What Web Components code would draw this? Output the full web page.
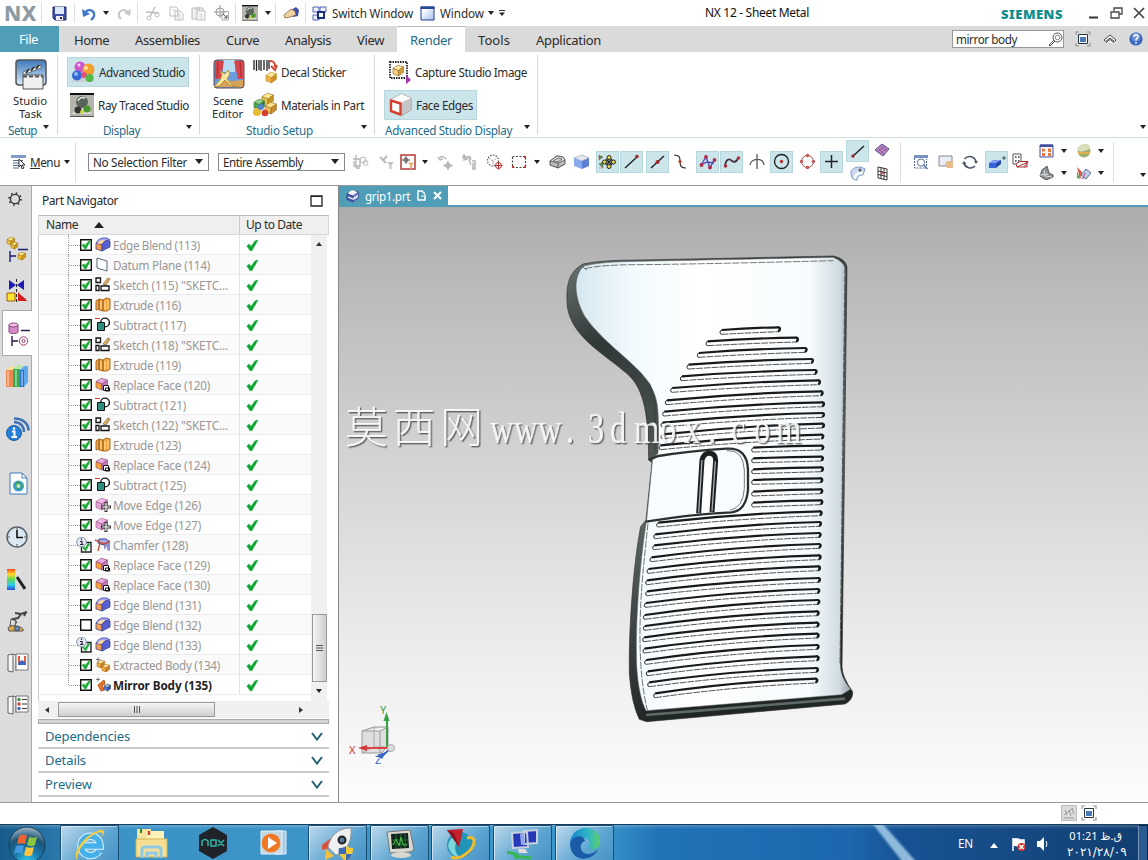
<!DOCTYPE html>
<html lang="en"><head><meta charset="utf-8"><title>NX 12 - Sheet Metal</title>
<style>html,body{margin:0;padding:0}body{width:1148px;height:860px;overflow:hidden;font-family:"Noto Sans","Open Sans",sans-serif;color:#2b2b2b;background:#fff}</style></head>
<body><nx-app></nx-app>
<script>
const svg=(w,h,b)=>`<svg width="${w}" height="${h}" viewBox="0 0 ${w} ${h}" fill="none">${b}</svg>`;
const block=(x,y,s,a,b,c,k='#555')=>`<g stroke="${k}" stroke-width=".6"><path d="M${x} ${y+s*.3}l${s*.5} ${s*.2}v${s*.5}l${-s*.5} ${-s*.2}z" fill="${b}"/><path d="M${x} ${y+s*.3}l${s*.45} ${-s*.28}l${s*.5} ${s*.15}l${-s*.45} ${s*.33}z" fill="${a}"/><path d="M${x+s*.5} ${y+s*.5}l${s*.45} ${-s*.33}v${s*.5}l${-s*.45} ${s*.33}z" fill="${c}"/></g>`;
const trace=(s)=>`<g transform="scale(${s/24})"><path d="M0 0h24v24H0z" fill="#b4b4ac"/><path d="M0 1h24" stroke="#111" stroke-width="2"/><path d="M0 23.500h24" stroke="#555"/><path d="M2 21l5-6h11l4 6z" fill="#ddd"/><circle cx="12" cy="9" r="6" fill="#59645a"/><path d="M8 8a5 5 0 0 1 7-3" stroke="#eee" stroke-width="1.500"/><circle cx="8" cy="17" r="3.500" fill="#333"/><circle cx="17" cy="16" r="3.600" fill="#49962f"/><circle cx="12" cy="19" r="2" fill="#d3d33c"/></g>`;
const blend='<g stroke="#3a3f98" stroke-width=".8"><path d="M1 6l6 1.500V14l-6-2z" fill="#f6a24a"/><path d="M7 7.500Q8 4 12 3.500l3 .5V10l-8 4z" fill="#5a5fd0"/><path d="M1 6Q3 2 7 1h5l3 2Q9 3 7 7.500z" fill="#a9acf2"/></g><path d="M2 6.500Q4 3.500 7 3l3 .5Q8 5 6.500 7z" fill="#ffd79a"/>';
const rep=block(1,1,12,'#e9a8e6','#f6a138','#c77bc5','#7b3c5c')+'<path d="M8.500 8.500h5v5h-5zM10.500 11h4v3h-4z" stroke="#111" fill="#fff"/>';
const sub='<path d="M0 1.500h5" stroke="#e03030"/><circle cx="10" cy="5.500" r="4.400" stroke="#111" stroke-width="1.400"/><path d="M2.500 5.500h7v8h-7z" fill="#2f8f7e" stroke="#111"/>';
const reel='<path d="M2 5q3-5 7 0M1 3l2 3 3-1" stroke="#b8b8b8" stroke-width="1.400"/><path d="M11 7v9M6.500 11.500h9" stroke="#a9a9a9" stroke-width="1.300"/><circle cx="11" cy="11.500" r="2.500" stroke="#b0b0b0"/>';
const door='<path d="M1 2l5-1v18l-5-1zM6 1l3 1v16" fill="#f5f5f5" stroke="#666"/><path d="M9 1h12v16H9z" fill="#fff" stroke="#777"/>';
const I={
dn:[6,4,'<path d="M0 0h6L3 4z" fill="#222"/>'],dnb:[8,5,'<path d="M0 0h8L4 5z" fill="#222"/>'],up:[10,6,'<path d="M0 6h10L5 0z" fill="#222"/>'],sup:[6,4,'<path d="M0 4h6L3 0z" fill="#333"/>'],lf:[4,6,'<path d="M4 0v6L0 3z" fill="#333"/>'],rt:[4,6,'<path d="M0 0v6l4-3z" fill="#333"/>'],
dnl:[8,6,'<path d="M1 .5h6" stroke="#333"/><path d="M1 2.500h6L4 6z" fill="#222"/>'],
save:[15,15,'<path d="M1 1h13v13H3l-2-2z" fill="#3c50a4" stroke="#1c2a70"/><path d="M3 1h9v7H3z" fill="#dfe8fb"/><path d="M4 10h7v4H4z" fill="#eee"/><path d="M8 11h2v2H8z" fill="#223"/>'],
undo:[15,15,'<path d="M3 7c3-5 10-3 9 3-.5 2-2 3-3 4" stroke="#3f78c8" stroke-width="2.400"/><path d="M0 3l1 8 7-3z" fill="#3f78c8"/>'],
redo:[15,15,'<path d="M12 7C9 2 2 4 3 10c.5 2 1 2 2 3" stroke="#c8c8c8" stroke-width="2"/><path d="M15 3l-1 7-6-3z" fill="#c8c8c8"/>'],
cut:[15,15,'<path d="M10 1L5 11M1 6l13 1" stroke="#bdbdbd" stroke-width="1.400"/><circle cx="4" cy="12" r="2" stroke="#bdbdbd"/><circle cx="12" cy="9" r="2" stroke="#bdbdbd"/>'],
copy:[15,15,'<path d="M1 1h6l2 2v7H1zM6 5h5l3 3v6H6z" fill="#fff" stroke="#bbb"/><path d="M8 8h3M8 10h4M8 12h4M3 4h3" stroke="#ccc"/>'],
paste:[15,15,'<path d="M1 2h11v11H1z" fill="#eee" stroke="#bbb"/><path d="M4 1h5v3H4z" fill="#ccc"/><path d="M6 5h8v9H6z" fill="#fff" stroke="#bbb"/><path d="M8 8h4M8 10h4M8 12h4" stroke="#ccc"/>'],
cross:[16,16,'<circle cx="6" cy="7" r="4" stroke="#999"/><path d="M6 0v13M0 7h12" stroke="#999"/><path d="M8 6.500h6.500V15H8z" stroke="#aaa"/><path d="M9 9l4 4m0-3v3h-3" stroke="#555"/>'],
trs:[16,16,trace(16)],tr:[24,24,trace(24)],
hand:[17,14,'<path d="M8 4l5-3 3 3-1 6-5 1z" fill="#3b4fae"/><path d="M1 9l7-6 4 2 1 4-6 2-5 1z" fill="#f0d3a0" stroke="#75532a" stroke-width=".7"/>'],
sw:[15,15,'<path d="M1 1h6v5H1zM8 1h6v5H8zM1 9h6v5H1z" stroke="#5064b4" fill="#edf1ff"/><path d="M6 6h6v6H6z" fill="#fff" stroke="#1a2f82" stroke-width="2"/>'],
win:[15,15,'<defs><linearGradient id="w" x2="1" y2="1"><stop offset=".2" stop-color="#fff"/><stop offset="1" stop-color="#a8bff0"/></linearGradient></defs><path d="M1 1h13v13H1z" fill="url(#w)" stroke="#1b3f90"/><path d="M.5.500h14v2.500H.5z" fill="#24489b"/>'],
min:[10,3,'<path d="M0 1.500h9" stroke="#333" stroke-width="2"/>'],
rest:[13,12,'<path d="M4 4V1h8v6H9M1 5h8v6H1z" stroke="#444" stroke-width="1.300"/>'],
cls:[12,12,'<path d="M1 1l10 10M11 1L1 11" stroke="#444" stroke-width="1.700"/>'],
mag:[15,15,'<circle cx="9.500" cy="5.500" r="4.500" stroke="#555"/><circle cx="9.500" cy="5.500" r="2.300" stroke="#888"/><path d="M6 8l-5 5 1 1 5-5" stroke="#555"/>'],
full:[16,16,'<path d="M1 4V1h3M12 1h3v3M15 12v3h-3M4 15H1v-3" stroke="#9a9890" stroke-width="1.200"/><path d="M3.500 3.500h9v9h-9z" fill="#fff" stroke="#234"/><path d="M5 6h6v5H5z" fill="#4878b8"/>'],
chev:[14,10,'<path d="M1 6l6-5 6 5-1.500 1.500L7 4 2.500 7.500zM3 8.500l4-3 4 3" stroke="#444" fill="#fff"/>'],
help:[14,14,'<circle cx="7" cy="7" r="6.600" fill="#3c68bf"/><circle cx="7" cy="5" r="4.500" fill="#6a8dd5"/><path d="M5 5c0-3 4-3 4-.5C9 6 7 6 7 8.500M7 10v1.500" stroke="#fff" stroke-width="1.600"/>'],
task:[32,31,'<defs><linearGradient id="a" x2="0" y2="1"><stop stop-color="#3c78bb"/><stop offset="1" stop-color="#dcecf8"/></linearGradient></defs><rect x="1" y="1" width="30" height="25" rx="3" fill="url(#a)" stroke="#555" stroke-width="1.500"/><path d="M8 13L26 6v3L8 16z" fill="#e8eff5" stroke="#333" stroke-width=".6"/><path d="M11 14l3-4M16 12l3-4M21 10l3-4" stroke="#333" stroke-width="1.700"/><path d="M8 16h20v14H8z" fill="#f0f0f0" stroke="#555"/><path d="M8 17.500h20" stroke="#555" stroke-width="2" stroke-dasharray="4 2"/>'],
balls:[24,22,'<path d="M1 20L5 9h18v12H1z" fill="#c8cdd4"/><circle cx="9" cy="6" r="5.500" fill="#cf55cf"/><circle cx="17.500" cy="8.500" r="6" fill="#f4a02c"/><circle cx="6" cy="14.500" r="5" fill="#3567d6"/><circle cx="13" cy="14" r="3" fill="#e34f7a"/><circle cx="18.500" cy="17" r="4" fill="#52ba4b"/><circle cx="8" cy="4" r="1.500" fill="#f4cfff"/><circle cx="15" cy="7" r="2" fill="#ffe2a8"/><circle cx="5" cy="13" r="2" fill="#8cc0f4"/>'],
scene:[32,30,'<rect x="1" y="1" width="30" height="28" rx="3" fill="#679ce0" stroke="#6b4444"/><path d="M10 1h12v12h-12z" fill="#b9dcf5"/><path d="M2 2h9L8 20H2zM21 2h9v18h-5z" fill="#d9444c"/><path d="M5 2L4 19M27 2l1 16" stroke="#a6302e"/><path d="M2 28l6-7 12 1 10-1v7z" fill="#d7a257"/><path d="M7 12l5 3 3-4 2 4-3 5 5 6 7 2-8-1-6-6-6 6-5 1 6-7 2-5z" fill="#f8e99e" stroke="#b49343"/>'],
decal:[25,25,'<path d="M1 1v10M3.500 1v11M6 1v10M8 1v11M11 1v10M14 1v11M16 1v9" stroke="#222" stroke-width="1.300"/><path d="M17 2c4 0 5 2 5 6M18 7l4 4 2-5" stroke="#d3402e" stroke-width="2"/>'+block(13,13,11,'#ffe79b','#eeb245','#cf8b29','#b98d29')],
mat:[25,25,block(9,1,12,'#ffea8e','#eec548','#c99a26','#8d6b1d')+block(1,7,11,'#8fd08a','#4ea655','#2d7e38','#3b7340')+block(12,10,12,'#ffe08a','#eebd55','#ca8a2b','#8d6b1d')+'<circle cx="4" cy="20" r="4" fill="#e5bc34"/><circle cx="12" cy="21" r="3.300" fill="#d3402e"/><circle cx="8" cy="15" r="3" fill="#4f86cd"/>'],
cap:[23,24,'<path d="M2 2h17v16H2z" fill="#fff" stroke="#222" stroke-width="1.800" stroke-dasharray="1.500 1"/>'+block(5,5,11,'#ffe9a0','#f5cf7a','#d09d3f','#886624')+'<path d="M18 15v9l5-4z" fill="#a637ab"/>'],
face:[23,24,'<path d="M1 7L12 1l10 4v12l-10 6z" fill="#ddd" stroke="#888"/><path d="M1 7L12 1l10 4-10 5z" fill="#fff"/><path d="M12 10l10-5v12l-10 6z" fill="#c5c5c5"/><path d="M2 7.500l9.500 3v11L2 18z" fill="#fff" stroke="#d3402e" stroke-width="2.400" stroke-linejoin="round"/>'],
menu:[17,15,'<path d="M1 1h15v3H1z" fill="#7f9cc9"/><path d="M3 6.500h10M3 9h6M3 11.500h6M3 14h6" stroke="#556a88"/><path d="M9 5l6 6-3 0 2 3-2 1-1-4-2 2z" fill="#fff" stroke="#333"/>'],
g1:[17,16,'<path d="M4 1v13M1 5h7v7H2v-5M4 14h4" stroke="#b5b5b5" stroke-width="1.300"/><circle cx="11" cy="6" r="3" stroke="#bbb"/><circle cx="13.500" cy="9" r="2.400" stroke="#bbb"/>'],
g2:[16,16,'<path d="M1 3l3 3 4-4M4 6l3 3" stroke="#bbb" stroke-width="2"/><path d="M8 8h7l-2.500 3v4h-2v-4z" fill="#c5c5c5"/>'],
g3:[16,16,'<path d="M1 1h14v14H1z" fill="#fff" stroke="#b83a3a" stroke-width="1.500"/><path d="M6 2v8M2 6h8" stroke="#555"/><circle cx="6" cy="6" r="2" stroke="#555"/><path d="M8 8.500h6l-2 3v3h-2v-3z" fill="#e8b070"/>'],
g4:[16,16,reel],g5:[17,16,'<path d="M1 3h6l3 3M3 1l3 4-3 1zM8 6l2 5M11 7h3v8h-2V9M8 2l2 3" stroke="#b5b5b5" stroke-width="1.500"/>'],
g6:[17,16,'<circle cx="7" cy="6.500" r="5.500" stroke="#555" stroke-width="1.200" stroke-dasharray="1.500 1.300"/><path d="M3 4l4 3 4-3M7 7v5" stroke="#888" stroke-dasharray="1 1"/><circle cx="12.500" cy="11.500" r="3" fill="#fff" stroke="#b03030"/><path d="M12.500 7.500v8M8.500 11.500h8" stroke="#b03030"/>'],
g7:[16,14,'<path d="M1.500 1.500h13v11h-13z" stroke="#444" stroke-width="1.200" stroke-dasharray="2 1.500"/><path d="M13 11h2v2h-2zM1 11h2v2H1zM13 1h2v2h-2z" fill="#d13333"/>'],
g8:[17,15,'<path d="M1 7l7-5 6 1 2 3v4l-7 4-8-3z" fill="#bbb" stroke="#555"/><path d="M1 7l7-5 6 1 2 3-7 3z" fill="#e4e4e4" stroke="#666"/><path d="M4 7l5-3 4 1-4 3z" stroke="#777" fill="#ccc"/><path d="M9 9v5" stroke="#555"/>'],
g9:[17,17,'<path d="M1 5l8-3 7 3-7 3z" fill="#e6e6ec" stroke="#99a" stroke-width=".6"/><path d="M1 5l8 3v8l-8-3z" fill="#8aa9ea"/><path d="M9 8l7-3v8l-7 3z" fill="#5b80d1"/>'],
b1:[19,18,'<path d="M1 2l4 2-4 3zM1 11l4-2v6zM1 15h4" fill="#2a9858" stroke="#b44" stroke-width=".5"/><path d="M8 6l6 6M14 6l-6 6" stroke="#222" stroke-width="1.500"/><g fill="#f5df45" stroke="#222"><circle cx="11" cy="4.500" r="2"/><circle cx="11" cy="13.500" r="2"/><circle cx="6.500" cy="9" r="2"/><circle cx="15.500" cy="9" r="2"/></g>'],
b2:[17,17,'<path d="M2 15L14 4" stroke="#222" stroke-width="1.400"/><circle cx="14" cy="3.500" r="1.800" fill="#a42b2b"/>'],
b3:[17,17,'<path d="M2 15L15 3" stroke="#222" stroke-width="1.400"/><circle cx="8.500" cy="9" r="2" fill="#a42b2b"/>'],
b4:[15,16,'<path d="M1 1c6 0 6 3 6 6 0 5 1 7 6 7" stroke="#333" stroke-width="1.200"/><circle cx="7" cy="7.500" r="1.600" fill="#c03030"/>'],
b5:[18,16,'<path d="M2 11L7 3l4 11 4-8M2 11l6-3 7 1" stroke="#5344a8" stroke-width="1.300"/><g fill="#b32c4c"><circle cx="2.500" cy="11" r="1.900"/><circle cx="7" cy="3" r="1.900"/><circle cx="11" cy="13.500" r="1.900"/><circle cx="15.500" cy="6" r="1.900"/></g>'],
b6:[18,16,'<path d="M2 12c1-7 4-8 7-5 3 2 5 0 6-3" stroke="#44303a" stroke-width="1.900"/><circle cx="2.500" cy="12" r="1.800" fill="#b03040"/><circle cx="15.500" cy="4" r="1.800" fill="#b03040"/>'],
b7:[16,17,'<path d="M8 1v15M1 12C2 5 14 4 15 12" stroke="#555" stroke-width="1.300"/>'],
b8:[17,17,'<circle cx="8.500" cy="8.500" r="7" stroke="#222" stroke-width="1.400"/><circle cx="8.500" cy="8.500" r="1.700" fill="#b82d2d"/>'],
b9:[17,17,'<circle cx="8.500" cy="8.500" r="6" stroke="#985050"/><g fill="#c05555"><circle cx="8.500" cy="2.500" r="1.700"/><circle cx="8.500" cy="14.500" r="1.700"/><circle cx="2.500" cy="8.500" r="1.700"/><circle cx="14.500" cy="8.500" r="1.700"/></g>'],
b10:[17,17,'<path d="M8.500 2v13M2 8.500h13" stroke="#222" stroke-width="1.500"/>'],
b11:[17,17,'<path d="M3 14L15 3" stroke="#222" stroke-width="1.400"/><circle cx="4" cy="13" r="1.700" fill="#a42b2b"/>'],
b12:[16,15,'<path d="M1 5c3-4 7-4 10-4l4 2-2 6c-4 0-5 1-6 5-4 0-6-2-6-9z" fill="#cbd9f1" stroke="#7d96c8"/><path d="M5 13c0-6 3-6 8-6" stroke="#fff" stroke-width="2"/><circle cx="10" cy="4" r="1.500" fill="#555"/>'],
b13:[16,14,'<path d="M1 7l7-6 7 5-6 7z" fill="#a993cf" stroke="#5b4b94"/><path d="M4 5l6 6M6 3l7 5M3 9l8-6M6 11l7-6" stroke="#b04578" stroke-width=".8"/>'],
b14:[13,15,'<path d="M2 1l9 2v11l-9-2zM5 1.500v11M8 2v11M2 5l9 2M2 8.500l9 2" stroke="#3b3434"/><circle cx="6" cy="7" r="1.200" fill="#c04040"/>'],
c1:[16,16,'<path d="M1 1h14v3H1z" fill="#7992c4"/><path d="M1.500 4v10h12V5" stroke="#546896" stroke-dasharray="2 1"/><circle cx="8" cy="8.500" r="3.600" fill="#fff" stroke="#58729c"/><path d="M10.500 11l4 4" stroke="#58729c" stroke-width="1.600"/>'],
c2:[16,14,'<path d="M1 1h13v10H1z" fill="#e9eefa" stroke="#888"/><path d="M7 9l2-3h6v7H9z" fill="#e6bd8a"/>'],
c3:[16,16,'<path d="M13 12A6.500 6.500 0 0 1 2 9M2.500 5A6.500 6.500 0 0 1 14 8" stroke="#4b5766" stroke-width="1.600"/><path d="M0 10l2-3 2.500 3zM12 7h4l-2 3z" fill="#4b5766"/>'],
c4:[20,18,'<path d="M2 10l4-3h8l-4 3z" fill="#7d9bf4"/><path d="M2 10h7v5H2z" fill="#3764db"/><path d="M9 10l5-3v4l-5 4z" fill="#2648a5"/><path d="M17 3v4M15 5h4" stroke="#456"/>'],
c5:[17,17,'<path d="M1 1h8v10H1z" fill="#fff" stroke="#555"/><path d="M3 3h1.500v2H3zM6 3h1.500v2H6zM3 7h1.500v2H3zM6 7h1.500v2H6z" fill="#667"/><path d="M4 11l4-2.500h8L12 14H5zM5 14l11-5M12 14l3 0v-5" fill="#fff" stroke="#a83030"/>'],
c6:[15,14,'<path d="M1 1h13v12H1z" fill="#f4f5ff" stroke="#4451a0"/><path d="M1 .5h13v2.500H1z" fill="#4451a0"/><path d="M3 4.500l3 .5v2.500H3zM9 4.500h3V8H9zM3 9h3v3H3zM9 9h3v3H9z" fill="#e87839"/>'],
c7:[15,14,'<path d="M3 4l5-4 2 7 4 2v2L7 14l-6-4z" fill="#8f9296" stroke="#555"/><path d="M5 4l1 6 7 1M1 9l8-1" stroke="#ddd"/>'],
c8:[14,14,'<circle cx="7" cy="7" r="6.500" fill="#9eaf69"/><path d="M1 7c5 2 9-1 12-2 1-8-13-7-12 2z" fill="#d8ddba"/><path d="M1 9h12" stroke="#dfae4d" stroke-width="2"/>'],
c9:[15,14,'<path d="M1 1l5 5-2 7z" fill="#d05a46"/><path d="M1 5l3 8-3-1z" fill="#50a050"/><path d="M5 9l5-6 5 4-5 6z" fill="#b9cce8" stroke="#5b6f92"/><path d="M3 10l4 3 2-6" stroke="#b85a80"/>'],
gear:[14,14,'<circle cx="7" cy="7" r="4.600" stroke="#333" stroke-width="1.400"/><circle cx="7" cy="7" r="6" stroke="#333" stroke-width="1.600" stroke-dasharray="1.600 3.120"/>'],
s1:[22,25,block(1,0,8,'#ffe482','#f3bf31','#d49b1a','#9c7919')+block(5,5,7,'#ffe482','#f3bf31','#d49b1a','#9c7919')+'<path d="M12 12.500h10M4 14v11M4 19h6" stroke="#1b1b72" stroke-width="1.400"/>'+block(12,15,8,'#ffe482','#f3bf31','#d49b1a','#9c7919')],
s2:[22,24,'<path d="M3 1l7 5-7 5zM18 1l-7 5 7 5z" fill="#201db4"/><path d="M10.500 0v24" stroke="#222" stroke-dasharray="3 2"/><path d="M1 14h8v8H1z" fill="#ffe42d" stroke="#9b5c10"/><path d="M12 13v9h9c-1-3-5-4-9-9z" fill="#d51f1f"/>'],
s3:[22,24,'<path d="M1 3v7c0 2 9 2 9 0V3" fill="#d589ca" stroke="#854575"/><ellipse cx="5.500" cy="3" rx="4.500" ry="2" fill="#f5bde9" stroke="#854575"/><path d="M13 8.500h9M4 14v10M4 19h6" stroke="#2c1a4a" stroke-width="1.400"/><circle cx="15.500" cy="19" r="4.200" stroke="#9a3a72"/><circle cx="15.500" cy="19" r="1.600" stroke="#9a3a72"/>'],
s4:[24,24,'<path d="M1 6h7v17H1z" fill="#ef8650"/><path d="M1 6l4-4 6 1-3 3z" fill="#fde1a1"/><path d="M8 5h7v18H8z" fill="#38a94d"/><path d="M8 5l4-4h7l-4 4z" fill="#b7eba5"/><path d="M15 6h4v17h-4z" fill="#2471cc"/><path d="M19 6l4-4v16l-4 5zM15 6l4-4h4l-4 4z" fill="#5aa8ee"/><path d="M3 7v15M11 6v16M17 7v15" stroke="#fff8" stroke-width="1.500"/>'],
s5:[24,25,'<circle cx="8" cy="16" r="7.500" fill="#2480d8" stroke="#1d5da8"/><path d="M6 14.500h2.500V20M5.500 20h5.500" stroke="#fff" stroke-width="2"/><circle cx="8" cy="11.500" r="1.300" fill="#fff"/><path d="M8 5c7 0 10 5 10 10M8 1.500c10 0 14.500 6 14.500 12" stroke="#3d72b5" stroke-width="2.600"/>'],
s6:[19,23,'<path d="M1 1h12l5 5v16H1z" fill="#fff" stroke="#3f7bb8"/><path d="M13 1v5h5" stroke="#3f7bb8"/><circle cx="9.500" cy="14" r="5.500" fill="#3d9fce"/><path d="M6 12l3-3 3 3-1 6-3-1zM12 12l2 2-2 3z" fill="#42a148"/><circle cx="9.500" cy="14" r="2" fill="#bfe6e6"/>'],
s7:[22,23,'<circle cx="11" cy="11" r="10" fill="#dbe7f2" stroke="#57606b" stroke-width="1.500"/><path d="M11 2v2M11 18v2M2 11h2M18 11h2" stroke="#555"/><path d="M11 4v7.500h6" stroke="#111" stroke-width="1.600"/>'],
s8:[19,23,'<defs><linearGradient id="r" x2="0" y2="1"><stop stop-color="#ff4a18"/><stop offset=".25" stop-color="#ffd92c"/><stop offset=".5" stop-color="#5ad94c"/><stop offset=".75" stop-color="#30cdf0"/><stop offset="1" stop-color="#2947d4"/></linearGradient></defs><path d="M0 1h8v21H0z" fill="url(#r)"/><path d="M10 9l8 12" stroke="#222" stroke-width="3"/><path d="M12 2v4M9 5h4M14 4l2-2" stroke="#eee"/>'],
s9:[21,23,'<path d="M8 3l6 1 6-2M14 4l-3 4-5 1 3 3-2 4M19 2l-2 4" stroke="#444" stroke-width="2"/><path d="M4 9l5 2-1 5H3z" fill="#ddd" stroke="#555"/><path d="M1 18c2-3 7-3 9 0 3-2 7 0 6 3H2z" fill="#dea949" stroke="#555"/><circle cx="10" cy="18.500" r="2.500" fill="#6290c5" stroke="#444"/>'],
s10:[22,20,door+'<path d="M11 3h8v9h-8z" fill="#e5563c"/><path d="M13 3h4v5h-4z" fill="#fff"/><path d="M11 10l4-3 4 3v2h-8z" fill="#3d66c2"/>'],
s11:[22,20,door+'<circle cx="12" cy="4.500" r="1.700" fill="#3f8c3f"/><circle cx="12" cy="9" r="1.700" fill="#c83b32"/><circle cx="12" cy="13.500" r="1.700" fill="#3f68bc"/><path d="M15 4.500h5M15 9h5M15 13.500h5" stroke="#333"/>'],
box:[13,12,'<path d="M1 1h11v10H1z" stroke="#222" stroke-width="1.300"/><path d="M1 1.500h11" stroke="#222"/>'],
chk:[13,13,'<path d="M.5 7L3.200 4.800 5 7 9 1.500 12.500.800 6 12H4z" fill="#17b03c"/><path d="M3 6l2 4 5-7" stroke="#0b8a2a" stroke-width=".7"/>'],
on:[12,12,'<path d="M.7.700h10.600v10.600H.700z" fill="#fff" stroke="#111" stroke-width="1.400"/><path d="M1.800 6l2.200-1.500L5 6l3.500-4 2.300.2L6 10.200H4.500z" fill="#1fae3b"/>'],
off:[12,12,'<path d="M.7.700h10.600v10.600H.700z" fill="#fff" stroke="#111" stroke-width="1.400"/>'],
inf:[16,16,'<path d="M5.500 5.500h9.500v9.500H5.500z" fill="#fff" stroke="#222" stroke-width="1.400"/><path d="M6 10l2-1 1 2 3-5 2 1-4 7H9z" fill="#1fae3b"/><circle cx="5.500" cy="5" r="4.800" fill="#e5eaf7" stroke="#8a94b0"/><path d="M5.500 1.500v1.500M4 4.500h2v3M4 7.500h3.500" stroke="#223" stroke-width="1.200"/>'],
blend:[16,15,blend],plane:[14,15,'<path d="M2 1l10 3v10L2 11z" stroke="#567" fill="#fff"/>'],
sketch:[16,15,'<path d="M1 1h4.500v4.500H1zM1 8.500h3v5H1zM6 9h8v4.500H6z" stroke="#111" stroke-width="1.300"/><path d="M8 7l5-6 2 1-4 6z" fill="#edb656" stroke="#765" stroke-width=".8"/>'],
ext:[16,15,'<path d="M1 4l3-2v10l-3 1zM4 2l4 1v11l-4-1zM8 3l3-2 4 1v10l-3 2H8z" fill="#f8a43d" stroke="#a86a22"/><path d="M6 4v8M10 4v9M13 3v9" stroke="#ffe0a6"/>'],
sub:[16,15,sub],rep:[16,15,rep],move:[16,15,block(1,1,12,'#f3b8e6','#e6a1d8','#d58fca','#92527f')+'<path d="M11 5v10M6 10h10" stroke="#333" stroke-width="3"/><path d="M11 6v8M7 10h8" stroke="#fff" stroke-width="1.200"/>'],
cham:[16,15,'<path d="M4 2h7l4 3-6 3-6-2z" fill="#a9acf2" stroke="#333a90"/><path d="M9 8l6-3v9l-3-1V9l-3 4z" fill="#8d90d7"/><path d="M0 3l9 4 6-3M5 6L3 14" stroke="#c35434" stroke-width="1.400"/>'],
xb:[16,15,'<path d="M1 2.500h4M3 .500v4" stroke="#777"/>'+block(2,3,8,'#ffe09a','#f5af3c','#d28523','#a36d1e')+block(7,7,8,'#ffe09a','#f5af3c','#d28523','#a36d1e')],
mb:[16,15,'<path d="M1 2.500h4M3 .500v4" stroke="#777"/><path d="M3 8l6-5 1 4-3 1 2 5-3 1z" fill="#ee7627" stroke="#b8521c"/>'+block(9,7,7,'#a3bdf5','#5f84dd','#365bb5','#345')],
V:[12,9,'<path d="M1 1l5 6.500L11 1" stroke="#1f5f78" stroke-width="2"/>'],
prt:[14,14,block(1,1,12,'#eef','#4a55ba','#8b93dd','#2e3377')+'<path d="M3 4q4-4 7 0M2 8l5 2 5-3" stroke="#fff" stroke-width="1.300"/>'],
pg:[10,11,'<path d="M8 7v3H1V1h4l3 3" stroke="#fff" stroke-width="1.400"/><path d="M4 6h5M7 4l2 2-2 2" stroke="#fff"/>'],x:[9,9,'<path d="M1 1l7 7M8 1L1 8" stroke="#fff" stroke-width="2"/>'],
grid:[16,16,'<path d="M.5.500h15v15H.500z" fill="#dcdcdc" stroke="#bbb"/><path d="M3 10l9-7M4 5l2 5M8 5l2 6M11 4l2 5M3 13h10" stroke="#999"/>'],
thumb:[8,7,'<path d="M1.500 0v7M4 0v7M6.500 0v7" stroke="#555"/>'],thumbv:[7,8,'<path d="M0 1.500h7M0 4h7M0 6.500h7" stroke="#555"/>'],
orb:[38,36,'<defs><radialGradient id="o" cx=".5" cy="1" r="1"><stop stop-color="#32d4fa"/><stop offset=".4" stop-color="#1974a6"/><stop offset=".7" stop-color="#1c5478"/><stop offset="1" stop-color="#a3b8c6"/></radialGradient></defs><circle cx="19" cy="20" r="18" fill="url(#o)" stroke="#163e5c"/><path d="M11 11c3-2 6-1 8 0l-2 8c-2-1-5-1-8 0z" fill="#ed6532"/><path d="M21 12c3 1 5 1 8 0l-2 8c-3 2-5 1-8 0z" fill="#8bc53b"/><path d="M8 21c3-1 5-1 8 0l-2 8c-3-2-5-1-8 0z" fill="#429be0"/><path d="M18 22c3 1 5 1 8 0l-2 8c-3 2-5 1-8 0z" fill="#fbc63e"/>'],
ie:[34,34,'<path d="M26 24c-5 8-18 5-18-5C8 6 27 6 27 19H11" stroke="#dff6ff" stroke-width="7.500"/><path d="M26 24c-5 8-18 5-18-5C8 6 27 6 27 19H11" stroke="#45b1ec" stroke-width="5.500"/><path d="M4 33C-1 27 10 8 27 3c5-1 5 3 2 8 2-5 0-7-5-5C13 11 4 24 4 33z" fill="#f7cd3a"/>'],
fold:[34,32,'<path d="M3 6h12l2 3h13v20H3z" fill="#e8c667"/><path d="M3 2h14v10H3z" fill="#f5e4a0"/><path d="M13 4h17v9H13z" fill="#fff1b8"/><path d="M2 12h31v18H2z" fill="#f4df92" stroke="#d0b454"/><path d="M15 4v4" stroke="#c43" stroke-width="2.500"/><path d="M7 2v4" stroke="#283" stroke-width="2"/><path d="M8 31v-8q0-3 3-3h13q3 0 3 3v8M13 31v-5h9v5" stroke="#8ecae8" stroke-width="3"/>'],
nox:[30,34,'<path d="M15 1l14 8v16l-14 8-14-8V9z" fill="#202329"/><path d="M4 20v-5q3-3 6 0v5M13 14h5v6h-5zM20 14l6 6M26 14l-6 6" stroke="#2cb7a8" stroke-width="1.500"/>'],
wmp:[27,26,'<path d="M15 1h11v23H15z" fill="#a5cae2" stroke="#dfeef8"/><path d="M1 1h21v23H1z" fill="#c3d8e3" stroke="#e7f2f8"/><circle cx="11" cy="13" r="9.500" fill="#ee7824" stroke="#fff2"/><path d="M8 7v12l9-6z" fill="#fff"/>'],
rocket:[32,34,'<path d="M9 11L0 18v5l8-2z" fill="#d9523d"/><path d="M4 22l-1 11 9-4z" fill="#f5bd3d"/><path d="M29 1C14 1 8 11 6 20l8 8C23 25 30 17 29 1z" fill="#eef0f2" stroke="#999"/><circle cx="20" cy="13" r="3.500" fill="#557a98" stroke="#222" stroke-width="2"/><path d="M17 21q5 0 7-2 3 2 7 2c0 7-2 10-7 13-5-3-7-6-7-13z" fill="#f2ca37"/><path d="M24 19v8h-7c-.5-2-.5-4 0-6q5 0 7-2zM24 27h6c-1 3-3 5-6 7z" fill="#3769b7"/>'],
mon:[32,30,'<path d="M3 3l23-2 4 20-4 2-20 1z" fill="#d9d9d2" stroke="#777"/><path d="M7 5l17-1 1 15-17 1z" fill="#13221a"/><path d="M8 11h16M8 15h16M12 5v14M17 5v14M21 5v14" stroke="#1c6a35"/><path d="M9 16l3-6 3 7 2-9 2 8h4" stroke="#4ec845"/><ellipse cx="17" cy="26" rx="10" ry="3" fill="#d8d8d0"/>'],
nx:[34,34,'<circle cx="16" cy="18" r="13" fill="#2394b6"/><path d="M10 9q-8 6-5 13 4 8 11 9-7-7-4-15z" fill="#7fd5dc"/><path d="M7 30c10 4 24-8 23-17-1-3-4-3-7-2" stroke="#f1bc2d" stroke-width="3"/><path d="M3 3l16-1-4 18z" fill="#c3222c"/><path d="M3 3l7 3 5 14z" fill="#8b1420"/>'],
net:[32,32,'<path d="M17 3l13-1v13l-13 1zM5 5l15-1 1 15-15 1z" fill="#2637b7" stroke="#c9d1df" stroke-width="2"/><path d="M13 6l4-1 1 11-4 1z" fill="#90a7ec"/><path d="M0 24l8 2 4 3 12 1M7 29h10" stroke="#36b654" stroke-width="3"/><path d="M11 21h7l3 4h-9z" fill="#ddd"/>'],
edge:[34,34,'<defs><linearGradient id="e" x2="1"><stop stop-color="#1681cc"/><stop offset=".6" stop-color="#2fb6c8"/><stop offset="1" stop-color="#5bcd66"/></linearGradient></defs><path d="M2 17C3-5 34-3 32 16c-1 8-11 8-12 3 5-2 1-9-6-8C6 12 3 19 2 17z" fill="url(#e)"/><path d="M2 18c1-9 13-12 15-4-7 2-5 13 3 13 5 0 8-3 10-5-4 12-26 15-28-4z" fill="#195ca5"/>'],
tri:[8,5,'<path d="M0 5h8L4 0z" fill="#fff"/>'],flag:[16,16,'<path d="M2 2v13M2 3h5l2 1h4v6H8L2 9z" fill="#fff" stroke="#fff" stroke-width="1.500"/><circle cx="10.500" cy="11" r="4" fill="#d33b32"/><path d="M8.500 9l4 4M12.500 9l-4 4" stroke="#fff" stroke-width="1.500"/>'],
spk:[13,14,'<path d="M1 4h3l4-4v14L4 10H1z" fill="#fff"/><path d="M10 4q2 3 0 6" stroke="#fff"/>']
};
class NxIcon extends HTMLElement{connectedCallback(){const [w,h,b]=I[this.getAttribute('name')];this.attachShadow({mode:'open'}).innerHTML=`<style>:host{display:block;flex:none}svg{display:block}</style>${svg(w,h,b)}`}}
customElements.define('nx-icon',NxIcon);
/* One line of text whose tracking is adjusted to the width of its slot in the layout */
class NxText extends HTMLElement{connectedCallback(){const w=+this.getAttribute('w'),s=this.getAttribute('s')||11.7,l=this.getAttribute('l')||16;
this.attachShadow({mode:'open'}).innerHTML=`<style>:host{display:block;flex:none;width:${w}px;height:${l}px;line-height:${l}px;font-size:${s}px;white-space:nowrap}span{display:block;width:max-content}</style><span><slot></slot></span>`;
const e=this.shadowRoot.querySelector('span'),n=[...this.textContent].length;e.style.letterSpacing=((w-e.getBoundingClientRect().width)/n).toFixed(3)+'px'}}
customElements.define('nx-text',NxText);
const ic=n=>`<nx-icon name="${n}"></nx-icon>`;
const T=(x,t,w,s=11.7,st='',l=16)=>[x,w,`<nx-text w="${w}" s="${s}" l="${l}" style="${st}">${t}</nx-text>`];
const L=(x,t,w)=>T(x,t,w,11.3,'',13);
const G=(x,n,dy=0)=>[x,I[n][0],ic(n),dy];
const H=(x,w,n,h=22)=>[x,w,`<div class="hl" style="height:${h}px">${ic(n)}</div>`];
const S=(x,h=22)=>[x,1,`<div style="height:${h}px;background:#dedede"></div>`];
/* Lays items along a flex line, turning start edges into gaps */
const row=(h,items,x0=0)=>{let p=x0;return `<div class="row" style="height:${h}px">`+items.map(([x,w,html,dy])=>{const m=x-p;p=x+w;return `<div style="flex:none;width:${w}px;margin-left:${m}px;${dy?`margin-top:${dy*2}px`:''}">${html}</div>`}).join('')+'</div>'};
const base='*{box-sizing:border-box}.row{display:flex;align-items:center}.hl{background:#cbe5ea;border:1px solid #b5d7de;display:flex;align-items:center;justify-content:center}';
const def=(n,css,html)=>customElements.define(n,class extends HTMLElement{connectedCallback(){this.attachShadow({mode:'open'}).innerHTML=`<style>${base}:host{box-sizing:border-box}${css}</style>${html}`}});
def('nx-titlebar',':host{display:block;height:26px;background:#fff}',row(26,[T(4,'NX',33,21,'font-weight:800;color:#8b9aa3',24),S(41,20),G(52,'save'),S(74,20),G(82,'undo'),G(103,'dn'),G(116,'redo'),S(137,20),G(145,'cut'),G(169,'copy'),G(191,'paste'),G(214,'cross'),S(235,20),G(242,'trs'),G(265,'dn'),S(275,20),G(283,'hand'),S(305,20),G(312,'sw'),T(332,'Switch Window',81),G(420,'win'),T(440,'Window',44),G(488,'dn'),G(498,'dnl'),T(705,'NX 12 - Sheet Metal',104,12,'color:#111'),T(1001,'SIEMENS',62,13,'font-weight:900;color:#128d8d;padding-top:1px'),G(1089,'min',4),G(1110,'rest'),G(1133,'cls')]));
def('nx-tabs',':host{display:block;height:26px;background:#dadada}.f{background:#4f9db6;color:#fff;height:26px;padding:5px 0 0 19px}.a{background:#fff;color:#1d6b8a;height:26px;padding:5px 0 0 13px;border-top:1px solid #bbb}.s{background:#fff;border:1px solid #999;height:18px}',
row(26,[[0,59,'<div class="f"><nx-text w="19" s="13">File</nx-text></div>'],T(74,'Home',35,13,'padding-top:1px'),T(135,'Assemblies',65,13,'padding-top:1px'),T(226,'Curve',33,13,'padding-top:1px'),T(285,'Analysis',46,13,'padding-top:1px'),T(357,'View',27,13,'padding-top:1px'),[397,68,'<div class="a"><nx-text w="42" s="13">Render</nx-text></div>'],T(478,'Tools',32,13,'padding-top:1px'),T(536,'Application',65,13,'padding-top:1px'),[952,112,'<div class="s">'+row(16,[T(3,'mirror body',61),G(95,'mag')])+'</div>'],G(1075,'full'),G(1103,'chev'),G(1129,'help')]));
const grp=(w,a,b)=>`<div class="g" style="width:${w}px">${a}<div class="cap">${b}</div></div>`;
const c='color:#1d6b8a';
def('nx-ribbon',`:host{display:flex;height:86px;border-bottom:1px solid #d0dede;background:#fff;padding-top:3px}.g{height:80px;border-right:1px solid #dadada;flex:none}.body{display:flex;height:68px}.col{display:flex;flex-direction:column}.big{padding-top:3px}.btn{height:30px;background:#cbe5ea;border:1px solid #b5d7de}.cap{height:14px;display:flex;align-items:center}`,
grp(58,`<div class="body"><div class="col big">${row(32,[G(15,'task')])}<div style="height:4px"></div>${row(13,[L(13,'Studio',34)])}${row(13,[L(19,'Task',23)])}</div></div>`,row(16,[T(8,'Setup',29,11.7,c),G(43,'dn',-3)]))+
grp(142,`<div class="body"><div class="col" style="padding:2px 0 0 9px"><div class="btn" style="width:122px">${row(28,[G(3,'balls'),T(31,'Advanced Studio',86)])}</div>${row(35,[G(3,'tr'),T(31,'Ray Traced Studio',91)])}</div></div>`,row(16,[T(45,'Display',37,11.7,c),G(128,'dn',-3)]))+
grp(175,`<div class="body"><div class="col big">${row(31,[G(13,'scene')])}<div style="height:5px"></div>${row(13,[L(13,'Scene',30)])}${row(13,[L(12,'Editor',31)])}</div><div class="col">${row(33,[G(8,'decal'),T(36,'Decal Sticker',65)])}${row(33,[G(8,'mat'),T(36,'Materials in Part',83)])}</div></div>`,row(16,[T(46,'Studio Setup',67,11.7,c),G(161,'dn',-3)]))+
grp(163,`<div class="body"><div class="col" style="padding-left:9px">${row(33,[G(4,'cap'),T(31,'Capture Studio Image',112)])}<div class="btn" style="width:93px;margin-top:2px">${row(28,[G(4,'face'),T(31,'Face Edges',57)])}</div></div></div>`,row(16,[T(10,'Advanced Studio Display',127,11.7,c),G(149,'dn',-3)]))+
`<div style="flex:1;display:flex;justify-content:flex-end;align-items:flex-end;padding:0 2px 8px 0">${ic('dn')}</div>`);
const sel=(w,t,tw)=>`<div class="sel">${row(16,[T(4,t,tw),G(w-15,'dnb')])}</div>`;
const st=(a,b)=>`<div class="st">${a}${b}</div>`;
def('nx-toolbar','.sel{height:18px;border:1px solid #888;background:#fff}.st{display:flex;flex-direction:column;align-items:center;gap:4px}:host{display:block;height:48px;border-bottom:1px solid #999;background:#fff}',
row(47,[G(10,'menu'),[30,30,'<nx-text w="30"><u>M</u>enu</nx-text>'],G(64,'dn'),S(75,40),[88,121,sel(121,'No Selection Filter',94)],[218,127,sel(127,'Entire Assembly',80)],G(352,'g1'),G(379,'g2'),G(400,'g3'),G(422,'dn'),G(437,'g4'),G(461,'g5'),G(486,'g6'),G(511,'g7'),G(534,'dn'),G(549,'g8'),G(573,'g9'),H(596,23,'b1'),H(620,23,'b2'),H(646,23,'b3'),G(673,'b4'),H(696,23,'b5'),H(720,23,'b6'),G(749,'b7'),H(770,23,'b8'),G(799,'b9'),H(820,23,'b10'),[846,23,st('<div class="hl" style="width:23px;height:22px">'+ic('b11')+'</div>',ic('b12')),-1],[874,16,st(ic('b13'),'<div style="height:1px"></div>'+ic('b14'))],S(900,40),G(913,'c1'),G(938,'c2'),G(962,'c3'),H(985,23,'c4'),G(1012,'c5'),[1039,15,st(ic('c6'),'<div></div>'+ic('c7'))],[1061,6,`<div class="st" style="gap:18px">${ic('dn')}${ic('dn')}</div>`],[1076,15,st(ic('c8'),'<div></div>'+ic('c9'))],[1098,6,`<div class="st" style="gap:18px">${ic('dn')}${ic('dn')}</div>`],S(1113,40),G(1140,'dn',13)]));
const side=[['gear',8],['s1',6],['s2',6],['s3',6],['s4',5],['s5',6],['s6',9],['s7',6],['s8',7],['s9',7],['s10',7],['s11',7]];
const tops=[192,237,279,310,364,417,472,526,568,610,653,695];
let sp=186;
def('nx-sidebar',':host{display:flex;flex-direction:column;align-items:flex-start;width:32px;background:#dcdcdc;border-right:1px solid #aaa;height:616px}.on{background:#fff;height:46px;width:30px;margin-left:2px;padding:11px 0 0 5px;border:1px solid #aaa;border-right:0}',
side.map(([n,x],i)=>{const g=tops[i]-sp,h=n=='s3'?46:I[n][1];sp=tops[i]+h;return n=='s3'?`<div class="on" style="margin-top:${g}px">${ic(n)}</div>`:`<div style="margin:${g}px 0 0 ${x}px">${ic(n)}</div>`}).join(''));
const tree=[['blend','Edge Blend (113)',87],['plane','Datum Plane (114)',97],['sketch','Sketch (115) "SKETC...',115],['ext','Extrude (116)',68],['sub','Subtract (117)',73],['sketch','Sketch (118) "SKETC...',115],['ext','Extrude (119)',68],['rep','Replace Face (120)',97],['sub','Subtract (121)',73],['sketch','Sketch (122) "SKETC...',115],['ext','Extrude (123)',68],['rep','Replace Face (124)',97],['sub','Subtract (125)',73],['move','Move Edge (126)',88],['move','Move Edge (127)',88],['cham','Chamfer (128)',75,'inf'],['rep','Replace Face (129)',97],['rep','Replace Face (130)',97],['blend','Edge Blend (131)',88],['blend','Edge Blend (132)',88,'off'],['blend','Edge Blend (133)',88,'inf'],['xb','Extracted Body (134)',107],['mb','Mirror Body (135)',99]];
def('nx-navigator',`:host{display:block;width:307px;height:616px;background:#fff;border-right:1px solid #888;padding:1px 9px 0 6px}.hd{background:#efefef;border:1px solid #d8d8d8;border-top-color:#bbb;height:20px}
.tb{display:flex;height:466px;width:291px;border-left:1px solid #ccc}.rows{width:272px;flex:none}.r{display:flex;height:20px;border-bottom:1px solid #ececec}.r:nth-child(even){background:#fafafa}.n{width:201px;flex:none;border-right:1px solid #e4e4e4;display:flex}.ln{width:12px;height:20px;margin-left:29px;border-left:1px dotted #999;flex:none}.ln:after{content:"";display:block;margin-top:10px;border-top:1px dotted #999}.last{height:10px}
.k{width:12px;flex:none;display:flex;justify-content:flex-end;align-items:center;padding-top:1px}.i{width:16px;margin:0 2px 0 3px;flex:none;display:flex;align-items:center}.t{padding-top:2px;color:#979797}.y{padding:4px 0 0 6px}
.vs{width:16px;background:#f0f0f0;display:flex;flex-direction:column;align-items:center}.th{border:1px solid #999;background:linear-gradient(90deg,#f5f5f5,#cfcfcf);display:flex;align-items:center;justify-content:center}
.hs{height:17px;background:#f0f0f0;width:291px}.spl{height:5px;background:#d2d2d2;border:1px solid #aaa;margin:1px 0;width:291px}.sec{height:24px;width:291px;border-bottom:2px solid #ccc;display:flex;align-items:center}`,
row(28,[T(4,'Part Navigator',76,12),G(272,'box')])+`<div class="hd" style="width:291px">${row(18,[T(7,'Name',32,12),G(55,'up'),[200,1,'<div style="height:18px;background:#ccc"></div>'],T(207,'Up to Date',56,12)])}</div>`+
`<div class="tb"><div class="rows">${tree.map(([i,t,w,k='on'],j)=>`<div class="r"><div class="n"><div class="ln${j==22?' last':''}"></div><div class="k">${ic(k)}</div><div class="i">${ic(i)}</div><div class="t"${j==22?' style="color:#222;font-weight:700"':''}><nx-text w="${w}">${t}</nx-text></div></div><div class="y">${ic('chk')}</div></div>`).join('')}</div><div class="vs"><div style="margin-top:7px">${ic('sup')}</div><div class="th" style="width:15px;height:68px;margin-top:368px">${ic('thumbv')}</div><div style="margin-top:7px">${ic('dn')}</div></div></div>`+
`<div class="hs">${row(17,[G(7,'lf'),[20,157,'<div class="th" style="height:15px;background:linear-gradient(#f5f5f5,#cfcfcf)">'+ic('thumb')+'</div>'],G(261,'rt')])}</div><div class="spl"></div>`+
[['Dependencies',85],['Details',41],['Preview',47]].map(([t,w])=>`<div class="sec">${row(22,[T(7,t,w,13,c),G(273,'V')])}</div>`).join(''));
const slots=[[545,275,718,268],[503,309,772,299],[477,344,798,330],[446,379,817,363],[426,414,828,396],[397,449,838,427],[381,486,846,460],[373,520,850,493],[368,553,850,525],[368,588,850,557],[362,621,848,590],[640,628,848,623],[640,660,847,656],[640,693,847,688],[640,725,845,721],[640,760,845,754],[640,793,845,787],[355,853,843,820],[346,888,841,852],[343,921,840,885],[335,957,840,918],[326,992,840,952],[322,1026,838,985],[322,1059,838,1020],[318,1094,836,1053],[315,1130,836,1086],[315,1163,834,1120],[313,1197,834,1154],[314,1231,834,1187],[319,1265,834,1221],[324,1299,834,1255],[328,1332,832,1290],[346,1365,830,1322]].map(([a,b,x,y])=>{const q=a+(x-a)*.5,v=y+(b-y)*.18;return `<path d="M${a} ${b+8}Q${q} ${v+9} ${x} ${y+7}" stroke="#333" stroke-width="2.500" stroke-dasharray="20 3"/><path d="M${a+3} ${b-6}q-9 2-8 9 1 5 5 5" stroke="#222" stroke-width="3"/><path d="M${a} ${b-5}Q${q} ${v-6} ${x} ${y-6}" stroke="#17191b" stroke-width="6.500"/><path d="M${x-6} ${y-9}q13 0 11 10-1 7-8 7l-2-3 3-7z" fill="#17191b"/>`}).join('');
const xs=[0,24,48,76,98,120,144,170,194,218,241,264,286];
def('nx-viewport',`:host{display:flex;flex-direction:column;flex:1;height:616px}.tabs{height:19px;background:#fff}.tab{width:109px;height:19px;background:#4f9db6;color:#fff}.cv{height:597px;border-top:2px solid #4f9db6;background:linear-gradient(#acacac,#b9b9b9 12%,#d3d3d3 42%,#ececec 74%,#fdfdfd)}svg{display:block}`,
`<div class="tabs"><div class="tab">${row(19,[G(7,'prt'),T(26,'grip1.prt',45),G(78,'pg'),G(94,'x')])}</div></div><div class="cv"><svg width="809" height="594" viewBox="339 207 809 594" fill="none"><defs>
<linearGradient id="f" x1="0" x2="1"><stop stop-color="#d5e7ef"/><stop offset=".2" stop-color="#f2fafd"/><stop offset=".45" stop-color="#fff"/><stop offset=".85" stop-color="#f6fbfd"/><stop offset=".96" stop-color="#d0dce2"/><stop offset="1" stop-color="#95a1a7"/></linearGradient>
<linearGradient id="d" x2=".3" y2="1"><stop stop-color="#6d7776"/><stop offset=".2" stop-color="#303837"/><stop offset=".6" stop-color="#5a6463"/><stop offset="1" stop-color="#202625"/></linearGradient><filter id="sh" x="-5%" y="-5%" width="110%" height="120%"><feDropShadow dx="1.400" dy="1.400" stdDeviation=".4" flood-color="#444" flood-opacity=".9"/></filter></defs>
<g transform="translate(540 240) scale(.33333)"><path d="M130 72C84 95 77 140 82 200C95 290 190 340 250 392C310 435 325 510 326 660L336 668L318 840L302 860C282 960 266 1150 268 1300Q274 1390 298 1438L320 1445L915 1392Q940 1380 938 1355Q906 1310 906 1280L921 80Q915 55 880 48Q500 56 300 60Q180 60 130 72z" fill="url(#d)" stroke="#333" stroke-width="2"/>
<path d="M132 78C95 110 105 180 135 230C190 310 290 370 328 430C355 480 358 500 354 640L338 656L320 840C300 960 285 1150 290 1280Q296 1370 318 1412L905 1364L932 1348Q900 1310 901 1270L916 85Q912 66 880 52Q500 60 300 64Q180 65 132 78z" fill="url(#f)" stroke="#555" stroke-width="1.500"/>
<path d="M136 86Q180 74 300 74Q500 72 880 62M128 80L140 90M328 430L345 480V640M324 850L310 985C295 1150 295 1300 322 1410M915 80L900 1270" stroke="#333" stroke-width="2" stroke-dasharray="22 4"/>
<path d="M345 655Q450 638 560 630Q620 625 622 690V750Q618 810 575 816Q450 824 323 843L340 655z" fill="#f7fcfe"/><path d="M326 660L355 648Q450 633 560 626Q622 622 624 690V750Q618 812 575 817M318 845Q450 823 575 817" stroke="#2b3031" stroke-width="7"/><path d="M560 632Q610 628 613 690V745Q610 802 570 811" stroke="#777" stroke-width="3"/><path d="M476 820L486 660Q492 640 507 640Q527 640 527 662L516 816" stroke="#1c2021" stroke-width="15"/><path d="M476 818L486 660M516 814L526 664" stroke="#a4adb0" stroke-width="4"/><path d="M489 818L498 665Q506 640 513 664L505 817z" fill="#fff"/>
${slots}<path d="M318 1425L915 1376" stroke="#5e6968" stroke-width="8"/></g>
<path d="M362 731l12-4h14v18l-6 8h-20zM362 731h18l8-4M380 731v22" stroke="#999" fill="#bbb6"/><path d="M374 727v20l-12 6M374 747h14" stroke="#aaa"/><path d="M387 747V717" stroke="#37a047" stroke-width="2"/><path d="M383.500 721l3-9 3 9z" fill="#36a046"/><path d="M390 748H362" stroke="#d44" stroke-width="2"/><path d="M367 745l-9 3 9 3z" fill="#d43a3a"/><path d="M390 749l-9 8" stroke="#46b" stroke-width="2"/><path d="M386 752l-9 3 5 4z" fill="#3565c8"/><circle cx="391" cy="748" r="3.500" fill="#ddd" stroke="#aaa"/>
<g font-family="Noto Sans,sans-serif" font-size="11"><text x="380" y="714" fill="#37a047">Y</text><text x="349" y="754" fill="#c33">X</text><text x="375" y="764" fill="#3565c8">Z</text></g>
<g filter="url(#sh)" fill="#fff" fill-opacity=".85"><text x="345" y="443" font-family="Noto Sans CJK SC,sans-serif" font-weight="300" font-size="43" letter-spacing="4.500">莫西网</text><text transform="translate(490 443) scale(.72 1)" font-family="Liberation Serif,serif" font-size="45" x="${xs.map(v=>(v/.72).toFixed(1)).join(' ')}">www.3dmox.com</text></g></svg></div>`);
def('nx-status',':host{display:block;height:22px;background:#fff;border-top:1px solid #999}',row(20,[G(1061,'grid'),G(1081,'full')]));
const tb=(x,n,o)=>[x,59,`<div class="tb ${o?'o':''}">${ic(n)}</div>`];
def('nx-taskbar',':host{display:block;height:36px;overflow:hidden;color:#fff;border-top:1px solid #173c5c;background:linear-gradient(#fff3,#fff0 4px),linear-gradient(90deg,#175c8b,#2674a8 50px,#3c93c6 120px,#3b96cb 600px,#2273b6 660px,#1c67ad 850px,#175394 900px,#164b86 1000px,#123e70)}.tb{height:36px;display:flex;align-items:center;justify-content:center}.o{border:1px solid #194d73;border-bottom:0;border-radius:2px;background:linear-gradient(135deg,#bdd9ec,#5da5d1 60%,#4793c6);box-shadow:inset 1px 1px #fff8}svg{display:block}.clk{display:flex;flex-direction:column}.sd{height:36px;border:1px solid #0a2442;border-left-color:#7393b2;background:#2a5c91}',
row(36,[G(8,'orb'),tb(60,'ie',1),tb(121,'fold'),tb(183,'nox'),tb(244,'wmp'),tb(308,'rocket',1),tb(370,'mon',1),tb(431,'nx',1),tb(493,'net',1),tb(555,'edge',1),[865,66,'<svg width="66" height="36"><defs><filter id="b"><feGaussianBlur stdDeviation="1.300"/></filter></defs><path d="M7 -2h10L54 40H40z" fill="#a5cdea" opacity=".85" filter="url(#b)"/></svg>'],T(958,'EN',15),G(990,'tri',2),G(1011,'flag',1),G(1036,'spk',1),[1067,60,`<div class="clk"><nx-text w="48" s="11" style="margin-left:7px;direction:rtl;font-family:'Noto Sans','DejaVu Sans',sans-serif">ق.ظ 01:21</nx-text><nx-text w="59" s="12" style="font-family:'DejaVu Sans',sans-serif;direction:ltr;unicode-bidi:bidi-override">۲۰۲۱/۲۸/۰۹</nx-text></div>`,1],[1138,10,'<div class="sd"></div>']]));
def('nx-app',':host{display:block;width:1148px;height:860px}.main{display:flex;height:616px}','<nx-titlebar></nx-titlebar><nx-tabs></nx-tabs><nx-ribbon></nx-ribbon><nx-toolbar></nx-toolbar><div class="main"><nx-sidebar></nx-sidebar><nx-navigator></nx-navigator><nx-viewport></nx-viewport></div><nx-status></nx-status><nx-taskbar></nx-taskbar>');
</script></body></html>
